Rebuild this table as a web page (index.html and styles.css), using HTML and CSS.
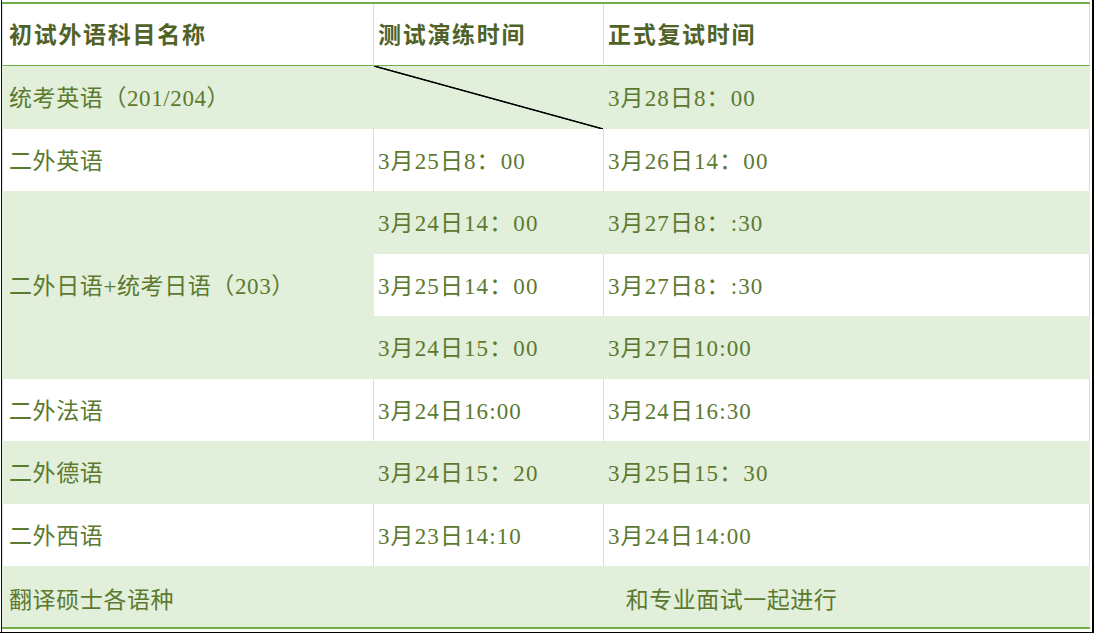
FILE: index.html
```html
<!DOCTYPE html>
<html lang="zh-CN">
<head>
<meta charset="utf-8">
<title>复试时间安排</title>
<link rel="stylesheet" href="styles.css">
</head>
<body>
<div class="screen">
  <div class="page">
    <table class="sheet">
      <colgroup>
        <col class="c1"><col class="c2"><col class="c3">
      </colgroup>
      <thead>
        <tr class="head">
          <th class="first">初试外语科目名称</th>
          <th>测试演练时间</th>
          <th>正式复试时间</th>
        </tr>
      </thead>
      <tbody>
        <tr class="g h63">
          <td class="first">统考英语（201/204）</td>
          <td class="diag"></td>
          <td class="time">3月28日8：00</td>
        </tr>
        <tr class="w h62">
          <td class="first">二外英语</td>
          <td class="time">3月25日8：00</td>
          <td class="time">3月26日14：00</td>
        </tr>
        <tr class="g h63">
          <td class="first merged" rowspan="3">二外日语+统考日语（203）</td>
          <td class="time">3月24日14：00</td>
          <td class="time">3月27日8：:30</td>
        </tr>
        <tr class="w h62">
          <td class="time">3月25日14：00</td>
          <td class="time">3月27日8：:30</td>
        </tr>
        <tr class="g h63">
          <td class="time">3月24日15：00</td>
          <td class="time">3月27日10:00</td>
        </tr>
        <tr class="w h62">
          <td class="first">二外法语</td>
          <td class="time">3月24日16:00</td>
          <td class="time">3月24日16:30</td>
        </tr>
        <tr class="g h63">
          <td class="first">二外德语</td>
          <td class="time">3月24日15：20</td>
          <td class="time">3月25日15：30</td>
        </tr>
        <tr class="w h62">
          <td class="first">二外西语</td>
          <td class="time">3月23日14:10</td>
          <td class="time">3月24日14:00</td>
        </tr>
        <tr class="g h61 last">
          <td class="first">翻译硕士各语种</td>
          <td class="center" colspan="2">和专业面试一起进行</td>
        </tr>
      </tbody>
    </table>
  </div>
</div>
</body>
</html>
```

FILE: styles.css
```css
html, body {
  margin: 0;
  padding: 0;
  background: #ffffff;
}

.screen {
  width: 1094px;
  height: 633px;
  box-sizing: border-box;
  padding-left: 1px;
  border-right: 2px solid #000000;
  border-bottom: 1px solid #000000;
  background: #ffffff;
  overflow: hidden;
}

.page {
  height: 100%;
  box-sizing: border-box;
  border-left: 1px solid #111111;
  padding-top: 2px;
}

.sheet {
  border-collapse: separate;
  border-spacing: 0;
  table-layout: fixed;
  width: 1088px;
  font-family: "Liberation Serif", "Noto Sans CJK SC", serif;
  font-size: 23px;
  color: #5b7a30;
  border-top: 2px solid #70ad47;
  border-bottom: 2px solid #70ad47;
}

.c1 { width: 372px; }
.c2 { width: 230px; }
.c3 { width: 486px; }

.sheet th,
.sheet td {
  box-sizing: border-box;
  padding: 3px 0 0 4px;
  text-align: left;
  vertical-align: middle;
  line-height: 1.2;
  white-space: nowrap;
  border-right: 1px solid #d9dde6;
}

.sheet .first {
  padding-left: 6px;
  border-left: 1px solid #d9dde6;
}

.sheet td.first {
  letter-spacing: 0.6px;
}

.sheet td.time {
  letter-spacing: 1.1px;
}

.head th {
  height: 62px;
  font-weight: 700;
  letter-spacing: 1.7px;
  color: #4f6228;
  background: #ffffff;
  border-bottom: 1px solid #70ad47;
}

.h61 td { height: 61px; }
.h62 td { height: 62px; }
.h63 td { height: 63px; }

.sheet .last td {
  padding-top: 8px;
}

.g td {
  background: #e2efda;
  border-right-color: #e2efda;
}

.g td.first {
  border-left-color: #e2efda;
}

.w td {
  background: #ffffff;
}

.sheet td.merged {
  background: #e2efda;
  border-left-color: #e2efda;
  border-right-color: #e2efda;
}

.sheet td.diag {
  background-color: #e2efda;
  background-image: linear-gradient(to top right,
    transparent calc(50% - 1.2px),
    #000000 calc(50% - 0.4px),
    #000000 calc(50% + 0.4px),
    transparent calc(50% + 1.2px));
}

.sheet td.center {
  text-align: center;
  padding-left: 0;
  letter-spacing: 0.5px;
}
```
